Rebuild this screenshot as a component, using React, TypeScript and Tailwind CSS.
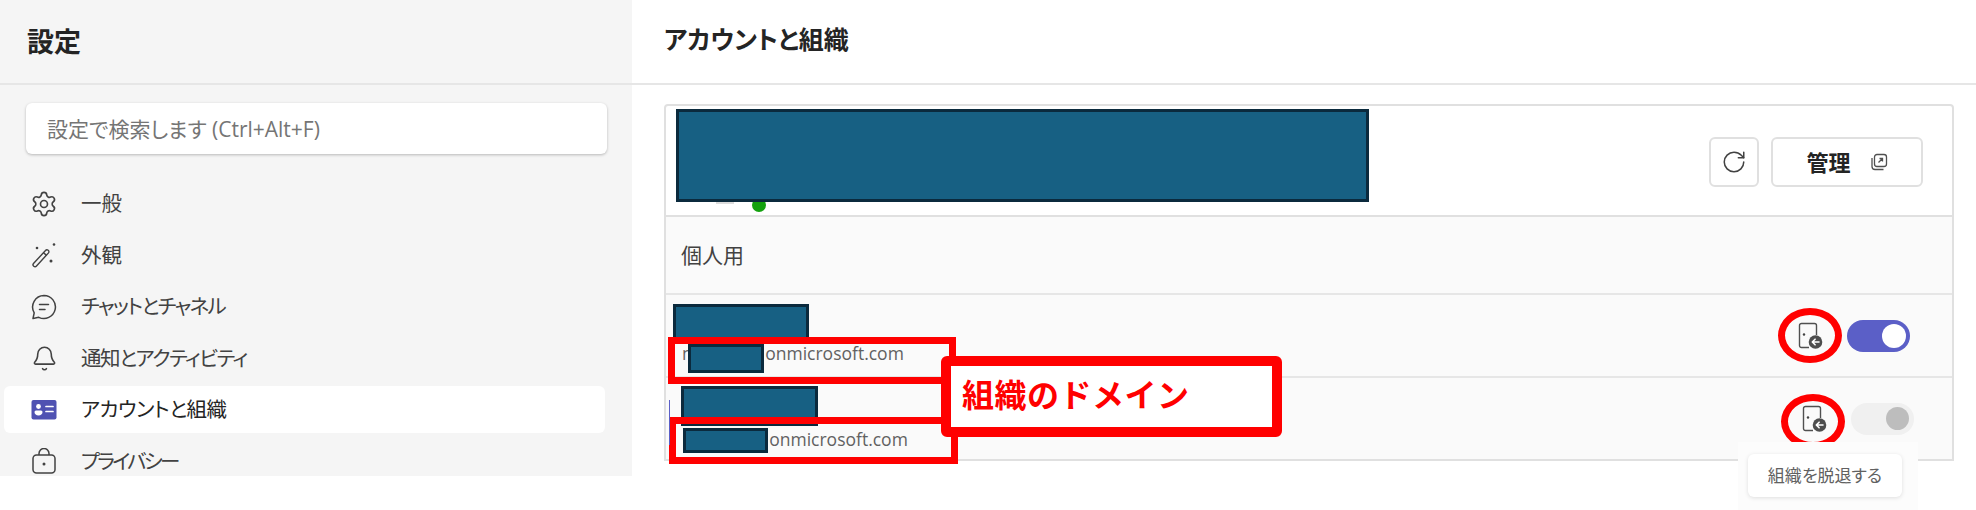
import React from 'react';
import { Bell, RotateCw, Settings } from 'lucide-react';

const WandIcon = () => (
  <svg width="26" height="26" viewBox="0 0 26 26" fill="none" stroke="#424242" strokeWidth="1.4">
    <path d="M2.5 21.5 14.5 8.5a1.9 1.9 0 0 1 3 2.4L5.5 24a1.9 1.9 0 0 1-3-2.5Z" strokeLinejoin="round" />
    <path d="m12.5 10.8 3 2.6" />
    <circle cx="6" cy="6" r="1.3" fill="#424242" stroke="none" />
    <circle cx="23" cy="2.5" r="1.3" fill="#424242" stroke="none" />
    <circle cx="20" cy="19" r="1.5" fill="#424242" stroke="none" />
  </svg>
);

const ChatIcon = () => (
  <svg width="26" height="26" viewBox="0 0 26 26" fill="none" stroke="#424242" strokeWidth="1.5">
    <path d="M13 1.5a11.5 11.5 0 1 1-5.2 21.8L2 24.5l1.2-5.7A11.5 11.5 0 0 1 13 1.5Z" strokeLinejoin="round" />
    <path d="M8.5 10.5h9M8.5 15.5h5.5" strokeLinecap="round" />
  </svg>
);

const CardIcon = () => (
  <svg width="26" height="20" viewBox="0 0 26 20">
    <rect x="0.5" y="0" width="25" height="19.5" rx="2" fill="#4f52b2" />
    <circle cx="7.5" cy="6.5" r="2.4" fill="#fff" />
    <path d="M3.5 12a1.5 1.5 0 0 1 1.5-1.5h5a1.5 1.5 0 0 1 1.5 1.5c0 2-1.8 3.5-4 3.5s-4-1.5-4-3.5Z" fill="#fff" />
    <path d="M15 6.5h7M15 11.5h7" stroke="#fff" strokeWidth="1.7" strokeLinecap="round" />
  </svg>
);

const LockIcon = () => (
  <svg width="24" height="26" viewBox="0 0 24 26" fill="none" stroke="#424242" strokeWidth="1.5">
    <rect x="1" y="7" width="22" height="18" rx="3.5" />
    <path d="M7 7V5.5a5 5 0 0 1 10 0V7" />
    <circle cx="12" cy="16" r="1.5" fill="#424242" stroke="none" />
  </svg>
);

const LeaveIcon = () => (
  <svg width="25" height="27" viewBox="0 0 25 27" fill="none">
    <path d="M11 25.5H3.5a2 2 0 0 1-2-2v-20a2 2 0 0 1 2-2h13a2 2 0 0 1 2 2V13" stroke="#505050" strokeWidth="1.4" />
    <circle cx="6" cy="12.5" r="1.2" fill="#424242" />
    <circle cx="17.5" cy="20" r="6.8" fill="#4d4d4d" />
    <path d="M21 20h-6.5m2.6-2.8L14.3 20l2.8 2.8" stroke="#fff" strokeWidth="1.6" strokeLinecap="round" strokeLinejoin="round" />
  </svg>
);

const OpenIcon = () => (
  <svg width="18" height="18" viewBox="0 0 18 18" fill="none" stroke="#505050" strokeWidth="1.3">
    <path d="M2 5v8.5A3 3 0 0 0 5 16.5h8.5" />
    <rect x="4.5" y="1.5" width="12" height="12" rx="2.5" />
    <path d="M8.5 9.5 12.5 5.5M9.5 5.5h3v3" />
  </svg>
);

const navItems = [
  { label: '一般', track: '', icon: <Settings size={28} strokeWidth={1.4} color="#424242" /> },
  { label: '外観', track: '', icon: <WandIcon /> },
  { label: 'チャットとチャネル', track: 'tracking-[-1.7px]', icon: <ChatIcon /> },
  { label: '通知とアクティビティ', track: 'tracking-[-1.5px]', icon: <Bell size={27} strokeWidth={1.4} color="#424242" /> },
  { label: 'アカウントと組織', track: 'tracking-[-0.5px]', icon: <CardIcon />, active: true },
  { label: 'プライバシー', track: 'tracking-[-2.7px]', icon: <LockIcon /> },
];

const OrgRow = ({ gap, on, last }: { gap: string; on: boolean; last?: boolean }) => (
  <div className={`flex flex-1 items-end justify-between bg-[#fafafa] ${last ? '' : 'border-b-2 border-[#e6e6e6]'}`}>
    <p className={`flex pl-4 text-[17.5px] leading-6 text-[#616161] ${last ? 'mb-[8px]' : 'mb-[11px]'}`}>
      <span>m</span>
      <span className={gap}>onmicrosoft.com</span>
    </p>
    <div className={`flex items-center self-center gap-[24px] ${on ? 'mr-[42px]' : 'mr-[38px]'}`}>
      <LeaveIcon />
      {on ? (
        <span className="flex h-[32px] w-[63px] items-center justify-end rounded-full bg-[#5b5fc7] pr-[4px]">
          <span className="h-[24px] w-[24px] rounded-full bg-white" />
        </span>
      ) : (
        <span className="flex h-[32px] w-[63px] items-center justify-end rounded-full bg-[#f0f0f0] pr-[5px]">
          <span className="h-[23px] w-[23px] rounded-full bg-[#bdbdbd]" />
        </span>
      )}
    </div>
  </div>
);

const App = () => {
  return (
    <div className="relative flex h-[510px] w-[1976px] items-start overflow-hidden bg-white font-['Open_Sans','Noto_Sans_CJK_JP',sans-serif] [font-feature-settings:'palt'] text-[#242424]">
      <aside className="h-[476px] w-[632px] shrink-0 overflow-hidden bg-[#f5f5f5]">
        <div className="flex h-[85px] items-center border-b-2 border-[#e6e6e6] pl-[27px] pt-[2px]">
          <h1 className="text-[27px] font-semibold">設定</h1>
        </div>
        <div className="mx-[26px] mt-[18px] flex h-[51px] w-[581px] items-center rounded-md bg-white pl-[21px] pt-[3px] text-[21px] text-[#757575] shadow-[0_1px_3px_rgba(0,0,0,0.25)]">
          設定で検索します (Ctrl+Alt+F)
        </div>
        <nav className="mt-[26px] flex flex-col gap-[4.5px]">
          {navItems.map((item) => (
            <div
              key={item.label}
              className={`ml-[4px] flex h-[47px] w-[601px] items-center rounded-md text-[20.5px] ${
                item.active ? 'bg-white text-[#242424]' : 'text-[#424242]'
              }`}
            >
              <span className="flex w-[77px] justify-center pl-[3px]">{item.icon}</span>
              <span className={item.track}>{item.label}</span>
            </div>
          ))}
        </nav>
      </aside>

      <main className="flex-1">
        <div className="flex h-[85px] items-center border-b-2 border-[#e6e6e6] pl-[32px] pb-[3px]">
          <h2 className="text-[25px] font-semibold">アカウントと組織</h2>
        </div>
        <section className="ml-[32px] mr-[22px] mt-[19px] flex h-[357px] flex-col rounded-t border-2 border-[#e0e0e0]">
          <div className="flex h-[111px] items-start justify-between border-b-2 border-[#e0e0e0]">
            <div className="flex items-center gap-[18px] pl-[50px] pt-[92px]">
              <span className="mb-[5px] h-[3px] w-[18px] bg-[#dcdcdc]" />
              <span className="h-[14px] w-[14px] rounded-full bg-[#13a10e]" />
            </div>
            <div className="mr-[29px] mt-[31px] flex gap-[12px]">
              <button className="flex h-[50px] w-[50px] items-center justify-center rounded-md border-2 border-[#e0e0e0] bg-white">
                <RotateCw size={26} strokeWidth={1.4} color="#424242" />
              </button>
              <button className="flex h-[50px] w-[152px] items-center justify-center gap-[19px] rounded-md border-2 border-[#e0e0e0] bg-white text-[22px] font-semibold">
                管理
                <OpenIcon />
              </button>
            </div>
          </div>
          <div className="flex h-[78px] items-center border-b-2 border-[#e6e6e6] bg-[#fafafa] pl-[15px] pt-[2px] text-[21px] text-[#424242]">
            個人用
          </div>
          <OrgRow gap="ml-[67px]" on />
          <OrgRow gap="ml-[71px]" on={false} last />
        </section>
      </main>

      {/* 黒塗りと注釈は画面の上に重ねる */}
      <div className="absolute left-[676px] top-[109px] h-[93px] w-[693px] border-[3px] border-[#0b2a3d] bg-[#176083]" />
      <div className="absolute left-[673px] top-[304px] h-[38px] w-[136px] border-[3px] border-[#0b2a3d] bg-[#176083]" />
      <div className="absolute left-[681px] top-[386px] h-[40px] w-[137px] border-[3px] border-[#0b2a3d] bg-[#176083]" />
      <div className="absolute left-[668px] top-[337px] h-[47px] w-[288px] border-[7px] border-[#ff0000]" />
      <div className="absolute left-[669px] top-[417px] h-[47px] w-[289px] border-[7px] border-[#ff0000]" />
      <div className="absolute left-[688px] top-[344px] h-[29px] w-[76px] border-[3px] border-[#0b2a3d] bg-[#176083]" />
      <div className="absolute left-[683px] top-[428px] h-[25px] w-[85px] border-[3px] border-[#0b2a3d] bg-[#176083]" />
      <div className="absolute left-[669px] top-[400px] h-[45px] w-[1px] bg-[#5b5fc7]" />

      <div className="absolute left-[941px] top-[356px] flex h-[81px] w-[341px] items-center rounded-md border-[10px] border-[#ff0000] bg-white pb-[4px] pl-[11px] text-[32px] font-bold tracking-[0.5px] text-[#ff0000] [font-feature-settings:normal]">
        組織のドメイン
      </div>

      <div className="absolute left-[1778px] top-[308px] h-[55px] w-[64px] rounded-[50%] border-[7px] border-[#ff0000]" />
      <div className="absolute left-[1781px] top-[394px] h-[55px] w-[64px] rounded-[50%] border-[7px] border-[#ff0000]" />

      <div className="absolute left-[1738px] top-[442px] flex h-[68px] w-[180px] items-start bg-[#fcfcfc] pl-[10px] pt-[12px]">
        <div className="flex h-[43px] w-[154px] items-center justify-center rounded-md bg-white text-[17px] text-[#616161] shadow-[0_1px_4px_rgba(0,0,0,0.12)]">
          組織を脱退する
        </div>
      </div>
    </div>
  );
};

export default App;
